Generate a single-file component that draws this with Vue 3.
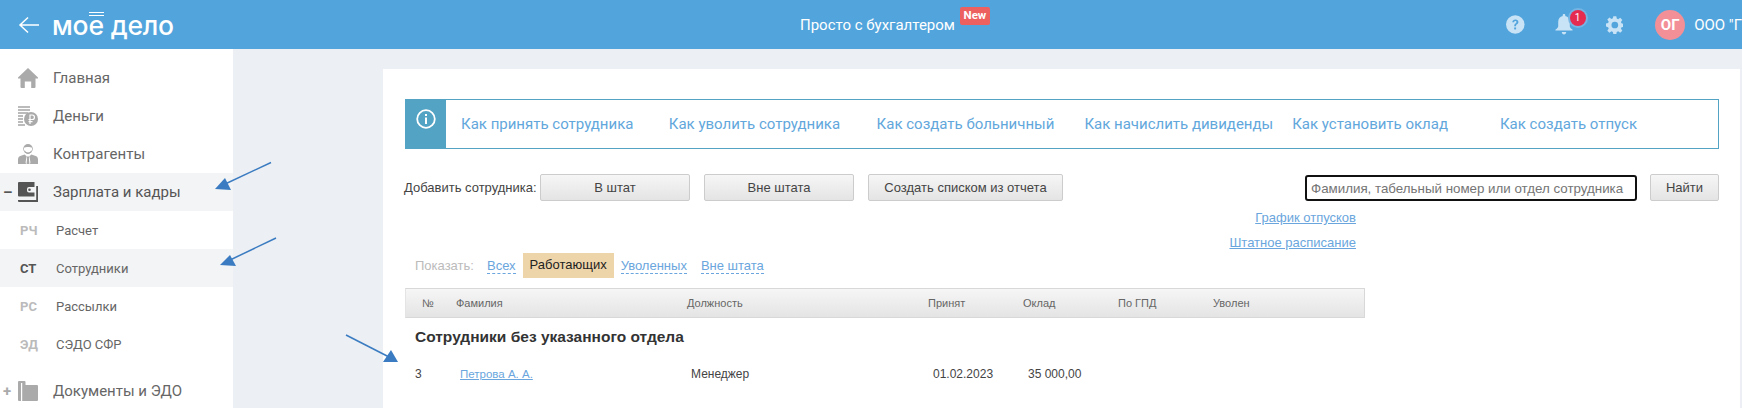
<script setup>
const nav = [
  { label: 'Главная', icon: 'home' },
  { label: 'Деньги', icon: 'money' },
  { label: 'Контрагенты', icon: 'person' }
]
const subNav = [
  { code: 'РЧ', label: 'Расчет' },
  { code: 'СТ', label: 'Сотрудники', active: true },
  { code: 'РС', label: 'Рассылки' },
  { code: 'ЭД', label: 'СЭДО СФР' }
]
const tips = [
  'Как принять сотрудника',
  'Как уволить сотрудника',
  'Как создать больничный',
  'Как начислить дивиденды',
  'Как установить оклад',
  'Как создать отпуск'
]
const heads = ['№', 'Фамилия', 'Должность', 'Принят', 'Оклад', 'По ГПД', 'Уволен']
</script>

<template>
  <div class="page">
    <header class="top">
      <div class="brand">
        <svg class="back" width="22" height="18" viewBox="0 0 22 18" fill="none" stroke="#fff" stroke-width="1.5">
          <path d="M21 9H2M10 1.500 2 9l8 7.500" />
        </svg>
        <span class="logo">мо<span class="yo">е</span> дело</span>
      </div>
      <div class="title-wrap">
        <span class="title">Просто с бухгалтером</span>
        <span class="new">New</span>
      </div>
      <div class="tools">
        <svg class="help" width="21" height="21" viewBox="0 0 20 20">
          <circle cx="10" cy="10" r="10" fill="#c8e2f6" />
          <path d="M6.800 7.600c.2-1.900 1.500-3 3.400-3 1.900 0 3.200 1.100 3.200 2.700 0 1.300-.8 1.900-1.600 2.500-.7.500-1 .9-1 1.700v.4H8.900v-.6c0-1.200.5-1.800 1.300-2.400.7-.5 1.100-.9 1.100-1.500 0-.7-.5-1.100-1.200-1.100-.8 0-1.200.5-1.300 1.300z" fill="#52a5dc" />
          <rect x="8.800" y="13.200" width="2.100" height="2.100" fill="#52a5dc" />
        </svg>
        <div class="bell">
          <svg width="18" height="21" viewBox="0 0 18 21" fill="#c8e2f6">
            <path d="M9 0c.8 0 1.300.5 1.300 1.300v.6c2.800.6 4.500 2.800 4.500 5.800v4.200c0 1.300.8 2.300 2.700 3.700v1H.5v-1c1.900-1.400 2.700-2.400 2.700-3.700V7.700c0-3 1.700-5.200 4.500-5.800v-.6C7.700.5 8.200 0 9 0zM6.800 18h4.400c0 1.500-1 2.500-2.200 2.500S6.800 19.500 6.800 18z" />
          </svg>
          <span class="count">1</span>
        </div>
        <svg class="gear" width="20" height="20" viewBox="0 0 20 20">
          <path fill="#c8e2f6" fill-rule="evenodd" d="M8.300 0h3.400l.5 2.700 1.600.7 2.300-1.600 2.400 2.400-1.600 2.300.7 1.600 2.400.5v3.400l-2.400.5-.7 1.600 1.600 2.300-2.400 2.400-2.300-1.600-1.600.7-.5 2.400H8.300l-.5-2.400-1.600-.7-2.300 1.600-2.400-2.400 1.600-2.300-.7-1.600L0 11.700V8.300l2.400-.5.7-1.600-1.600-2.300 2.400-2.400 2.300 1.600 1.600-.7zM10 6.200a3.800 3.800 0 1 0 0 7.600 3.800 3.800 0 0 0 0-7.600z" />
        </svg>
        <span class="avatar">ОГ</span>
        <span class="org">ООО "Г</span>
      </div>
    </header>

    <div class="body">
      <aside class="side">
        <div v-for="item in nav" :key="item.label" class="row">
          <span class="mark"></span>
          <svg v-if="item.icon === 'home'" class="ico" width="20" height="20" viewBox="0 0 20 20" fill="#aaa">
            <path d="M10 0 20 9.500v1h-2.500V19a1 1 0 0 1-1 1h-3.300v-6.500H6.800V20H3.500a1 1 0 0 1-1-1v-8.500H0v-1z" />
          </svg>
          <svg v-else-if="item.icon === 'money'" class="ico" width="20" height="20" viewBox="0 0 20 20">
            <path fill="#bbb" d="M0 0h12v2H0zM0 3h12v2H0zM0 6h10v2H0zM0 9h5v2H0zM0 12h5v2H0zM0 15h5v2H0zM0 18h7v2H0z" />
            <circle cx="13" cy="13" r="7" fill="#aaa" />
            <path fill="none" stroke="#fff" stroke-width="1.200" d="M12 18V9h2.200a2.200 2.200 0 0 1 0 4.500H10.500M10.500 15.700h4" />
          </svg>
          <svg v-else class="ico" width="20" height="20" viewBox="0 0 20 20" fill="#aaa">
            <circle cx="10" cy="4.800" r="4.800" />
            <path fill="#fff" d="M6 3.800c1.500-1 6.500-1 8 0v1.500c0 2-2 3.200-4 3.200S6 7.300 6 5.300z" />
            <path d="M7 6.500C7.500 8 8.700 8.800 10 8.800s2.500-.8 3-2.300c0 2-1.200 3.500-3 3.500S7 8.500 7 6.500zM0 20v-4.500c0-2 1-3 3-3.700l3.600-1.300 2 1.700-1 6 .4 1.800zM20 20v-4.500c0-2-1-3-3-3.700l-3.600-1.300-2 1.700 1 6-.4 1.800zM8.800 12.500h2.400l-.3 2 .6 5.500H8.500l.6-5.500z" />
          </svg>
          <span>{{ item.label }}</span>
        </div>

        <div class="row on">
          <span class="mark dark">–</span>
          <svg class="ico" width="20" height="20" viewBox="0 0 20 20">
            <path fill="#555" d="M1 0h15.500v5H11a2 2 0 0 0-2 2v1.500a2 2 0 0 0 2 2h5.500v4H1a1 1 0 0 1-1-1V1a1 1 0 0 1 1-1z" />
            <path fill="#555" d="M18.200 4H20v16H1a1 1 0 0 1-1-1v-1h18.200z" />
            <circle cx="11.500" cy="7.700" r="1.300" fill="#555" />
          </svg>
          <span>Зарплата и кадры</span>
        </div>

        <div v-for="sub in subNav" :key="sub.code" class="sub" :class="{ on: sub.active }">
          <b class="code">{{ sub.code }}</b>
          <span>{{ sub.label }}</span>
        </div>

        <div class="row docs">
          <span class="mark">+</span>
          <svg class="ico" width="20" height="20" viewBox="0 0 20 20" fill="#aaa">
            <path d="M1 0h5.500a1 1 0 0 1 1 1v3H19a1 1 0 0 1 1 1v14a1 1 0 0 1-1 1H1a1 1 0 0 1-1-1V1a1 1 0 0 1 1-1z" />
            <path fill="#fff" d="M3 2h1.200v18H3z" />
          </svg>
          <span>Документы и ЭДО</span>
        </div>
      </aside>

      <main class="main">
        <section class="card">
          <div class="tips">
            <div class="tips-ico">
              <svg width="20" height="20" viewBox="0 0 20 20" fill="none" stroke="#fff" stroke-width="1.800">
                <circle cx="10" cy="10" r="8.800" />
                <path d="M10 8.500V15M10 5v2" stroke-width="2" />
              </svg>
            </div>
            <div class="tips-list">
              <a v-for="tip in tips" :key="tip" class="tip">{{ tip }}</a>
            </div>
          </div>

          <div class="toolbar">
            <span class="add-label">Добавить сотрудника:</span>
            <button class="btn wide">В штат</button>
            <button class="btn wide">Вне штата</button>
            <button class="btn report">Создать списком из отчета</button>
            <input class="search" placeholder="Фамилия, табельный номер или отдел сотрудника" />
            <button class="btn find">Найти</button>
          </div>

          <div class="side-links">
            <a>График отпусков</a>
            <a>Штатное расписание</a>
          </div>

          <div class="filter">
            <span class="show">Показать:</span>
            <a class="dash all">Всех</a>
            <span class="current">Работающих</span>
            <a class="dash fired">Уволенных</a>
            <a class="dash out">Вне штата</a>
          </div>

          <div class="thead">
            <span v-for="h in heads" :key="h">{{ h }}</span>
          </div>

          <h2 class="group">Сотрудники без указанного отдела</h2>

          <div class="trow">
            <span>3</span>
            <a>Петрова А. А.</a>
            <span>Менеджер</span>
            <span>01.02.2023</span>
            <span>35 000,00</span>
          </div>
        </section>
      </main>
    </div>

    <svg class="arrows" width="1742" height="408" viewBox="0 0 1742 408" fill="#3a7bc1" stroke="none">
      <path d="M271 162.500 223 185" stroke="#3a7bc1" stroke-width="1.500" />
      <path d="M215 189 225 178 231 190z" />
      <path d="M276 238 228 261" stroke="#3a7bc1" stroke-width="1.500" />
      <path d="M220 265 230 255 236 266z" />
      <path d="M346 335 391 358" stroke="#3a7bc1" stroke-width="1.500" />
      <path d="M398 362 383 362 391 350z" />
    </svg>
  </div>
</template>

<style>
html, body { margin: 0; background: #fff; overflow: hidden; }
</style>

<style scoped>
.page { position: relative; width: 1742px; height: 408px; overflow: hidden; font-family: "Liberation Sans", Arial, sans-serif; color: #444; }
a { color: #6aa6dd; }

.top { height: 49px; background: #52a5dc; display: flex; align-items: center; color: #fff; font-family: Roboto, sans-serif; }
.brand { width: 800px; flex: none; display: flex; align-items: center; padding-left: 18px; box-sizing: border-box; }
.logo { margin-left: 12px; font: 500 26.500px/30px Inter, sans-serif; letter-spacing: -0.200px; color: #fff; }
.yo { position: relative; display: inline-block; }
.yo::before { content: ""; position: absolute; left: 1px; right: 0; top: 2px; height: 2px; border-top: 1.500px solid #fff; border-bottom: 1.500px solid #fff; }
.title-wrap { display: flex; align-items: center; }
.title { font-size: 15px; }
.new { margin: -17px 0 0 5px; width: 30px; height: 18px; border-radius: 2px; background: #ec6160; font: 700 11.500px/17px Roboto, sans-serif; text-align: center; }
.tools { display: flex; align-items: center; margin-left: auto; width: 236px; flex: none; }
.bell { position: relative; width: 18px; height: 21px; margin-left: 30px; }
.count { position: absolute; left: 15px; top: -4px; width: 16px; height: 16px; border-radius: 50%; background: #e52b50; box-shadow: 0 0 0 2px #76b4e3; font-size: 10px; line-height: 16px; text-align: center; color: #fff; }
.gear { margin-left: 33px; }
.avatar { margin-left: 32px; flex: none; width: 30px; height: 30px; border-radius: 50%; background: #f39097; font: 700 15px/30px Roboto, sans-serif; text-align: center; }
.org { margin-left: 9px; font-size: 15px; white-space: nowrap; }

.body { display: flex; }
.side { width: 233px; height: 359px; flex: none; background: #fff; padding-top: 10px; box-sizing: border-box; font-family: Roboto, sans-serif; color: #666; }
.row { height: 38px; display: flex; align-items: center; font-size: 15px; }
.row.on, .sub.on { background: #f3f4f5; }
.row.on { color: #555; }
.mark { width: 18px; flex: none; text-align: left; padding-left: 3px; box-sizing: border-box; font-size: 15px; color: #aaa; font-weight: 700; line-height: 1; }
.mark.dark { color: #555; }
.ico { flex: none; margin-right: 15px; }
.sub { height: 38px; display: flex; align-items: center; font-size: 13px; color: #666; padding-left: 20px; }
.code { width: 36px; color: #bbb; font-size: 13px; }
.sub.on .code { color: #555; }
.docs { margin-top: 9px; }

.main { flex: 1; background: #eceff3; padding: 20px 2px 0 150px; height: 359px; box-sizing: border-box; }
.card { background: #fff; height: 339px; padding: 30px 0 0 22px; box-sizing: border-box; }

.tips { width: 1314px; height: 50px; box-sizing: border-box; border: 1px solid #53a3c4; display: flex; }
.tips-ico { width: 41px; margin: -1px 0 -1px -1px; background: #53a3c4; display: flex; justify-content: center; padding-top: 10px; box-sizing: border-box; flex: none; }
.tips-list { display: flex; padding-left: 15px; align-items: center; margin-top: -1px; font: 15px Roboto, sans-serif; }
.tip { flex: none; width: 207.800px; color: #62a7dc; }

.toolbar { margin-top: 25px; width: 1314px; height: 27px; display: flex; align-items: center; font-size: 13px; }
.add-label { width: 136px; margin-left: -1px; flex: none; color: #444; }
.btn { height: 27px; padding: 0; flex: none; box-sizing: border-box; border: 1px solid #ccc; border-radius: 2px; background: linear-gradient(#f6f6f6, #e4e4e4); font: 13px "Liberation Sans", Arial, sans-serif; color: #444; }
.wide { width: 150px; margin-right: 14px; }
.report { width: 195px; }
.search { margin-left: 242px; width: 332px; height: 26px; margin-top: 1px; box-sizing: border-box; flex: none; border: 2px solid #111; border-radius: 3px; padding: 0 4px; font: 13.330px "Liberation Sans", Arial, sans-serif; outline: none; }
.search::placeholder { color: #757575; opacity: 1; }
.find { width: 69px; margin-left: 13px; }

.side-links { width: 951px; margin-top: 7px; display: flex; flex-direction: column; align-items: flex-end; gap: 5px; font-size: 13px; line-height: 20px; }
.side-links a { text-decoration: underline; }

.filter { height: 25px; display: flex; align-items: center; font-size: 13px; }
.show { margin-left: 10px; width: 72px; color: #bbb; }
.dash { color: #6aa6dd; border-bottom: 1px dashed #6aa6dd; line-height: 15px; margin-top: 1px; }
.current { margin-left: 7px; width: 91px; height: 25px; background: #eed5a9; color: #222; text-align: center; line-height: 24px; }
.fired { margin-left: 7px; }
.out { margin-left: 14px; }

.thead { margin-top: 10px; width: 960px; height: 30px; box-sizing: border-box; padding-left: 16px; border: 1px solid #d8d8d8; border-left-color: #e4e4e4; display: grid; grid-template-columns: 34px 231px 241px 95px 95px 95px 1fr; align-items: center; background: linear-gradient(#f6f6f6, #e4e4e4); font-size: 11px; color: #666; }

.group { margin: 7px 0 0 10px; font: 700 15.500px/24px "Liberation Sans", Arial, sans-serif; color: #333; }

.trow { margin-top: 11px; height: 28px; padding-left: 10px; display: grid; grid-template-columns: 45px 231px 242px 95px 95px; align-items: center; font-size: 12px; color: #444; }
.trow a { text-decoration: underline; font-size: 11.500px; }

.arrows { position: absolute; left: 0; top: 0; pointer-events: none; }
</style>
